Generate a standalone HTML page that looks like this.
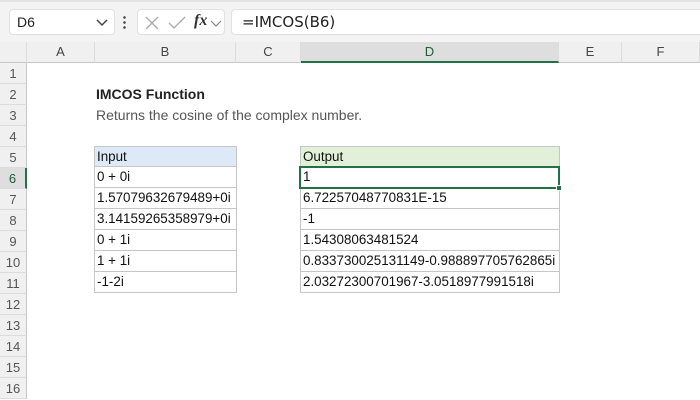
<!DOCTYPE html>
<html><head><style>
*{margin:0;padding:0;box-sizing:border-box}
body{width:700px;height:400px;overflow:hidden;background:#fff;font-family:"Liberation Sans",sans-serif;position:relative}
.abs{position:absolute}
.top{left:0;top:0;width:700px;height:42px;background:#f3f3f3;border-top:2px solid #e3e3e3}
.box{background:#fff;border:1px solid #e1e1e1;border-radius:4px}
.ch{top:42px;height:21px;background:#f0f0f0;border-bottom:1px solid #c8c8c8;border-right:1px solid #dcdcdc;font-size:13px;color:#444;text-align:center;line-height:20px}
.rh{left:0;width:27px;height:21px;background:#f0f0f0;border-bottom:1px solid #dcdcdc;border-right:1px solid #c8c8c8;font-size:13px;color:#555;text-align:center;line-height:21px}
.c{height:21px;border:1px solid #c6c6c6;font-size:13.4px;line-height:20px;padding-left:2px;color:#111;white-space:nowrap}
</style></head><body>
<div class="abs top"></div>
<div class="abs box" style="left:9px;top:9px;width:106px;height:26px;font-size:14px;line-height:24px;padding-left:7px;color:#222">D6
<svg class="abs" style="left:86px;top:9px" width="12" height="8"><path d="M1 1 L6 6 L11 1" stroke="#444" stroke-width="1.5" fill="none"/></svg></div>
<div class="abs" style="left:123px;top:15px;width:3px;height:14px;background:radial-gradient(circle,#555 1.2px,transparent 1.5px) 0 0/3px 5px"></div>
<div class="abs box" style="left:137px;top:9px;width:88px;height:26px">
<svg class="abs" style="left:6px;top:5px" width="16" height="16"><path d="M2 2 L14 14 M14 2 L2 14" stroke="#aaa" stroke-width="1.3"/></svg>
<svg class="abs" style="left:30px;top:5px" width="18" height="16"><path d="M1 8 L6 13 L17 2" stroke="#aaa" stroke-width="1.3" fill="none"/></svg>
<span class="abs" style="left:56px;top:2px;font-family:'Liberation Serif',serif;font-style:italic;font-weight:bold;font-size:16px;color:#333">fx</span>
<svg class="abs" style="left:72px;top:10px" width="12" height="8"><path d="M1 1 L6 6 L11 1" stroke="#888" stroke-width="1.2" fill="none"/></svg>
</div>
<div class="abs box" style="left:231px;top:9px;width:480px;height:26px;font-size:15px;line-height:24px;padding-left:10px;color:#222;font-family:'DejaVu Sans',sans-serif">=IMCOS(B6)</div>

<div class="abs ch" style="left:0;width:27px"></div>
<div class="abs ch" style="left:27px;width:68px">A</div>
<div class="abs ch" style="left:95px;width:141px">B</div>
<div class="abs ch" style="left:236px;width:65px">C</div>
<div class="abs ch" style="left:301px;width:258px;background:#dedede;border-bottom:2px solid #217346;color:#1e5c38">D</div>
<div class="abs ch" style="left:559px;width:63px">E</div>
<div class="abs ch" style="left:622px;width:78px">F</div>

<div class="abs rh" style="top:63px">1</div>
<div class="abs rh" style="top:84px">2</div>
<div class="abs rh" style="top:105px">3</div>
<div class="abs rh" style="top:126px">4</div>
<div class="abs rh" style="top:147px">5</div>
<div class="abs rh" style="top:168px;background:#dedede;border-right:2px solid #217346;color:#1e5c38">6</div>
<div class="abs rh" style="top:189px">7</div>
<div class="abs rh" style="top:210px">8</div>
<div class="abs rh" style="top:231px">9</div>
<div class="abs rh" style="top:252px">10</div>
<div class="abs rh" style="top:273px">11</div>
<div class="abs rh" style="top:294px">12</div>
<div class="abs rh" style="top:315px">13</div>
<div class="abs rh" style="top:336px">14</div>
<div class="abs rh" style="top:357px">15</div>
<div class="abs rh" style="top:378px">16</div>

<div class="abs" style="left:96px;top:86px;font-size:14px;font-weight:bold;color:#222">IMCOS Function</div>
<div class="abs" style="left:96px;top:107px;font-size:14px;color:#555">Returns the cosine of the complex number.</div>

<div class="abs" style="left:94px;top:146px;width:143px">
<div class="c" style="background:#dde9f7">Input</div>
<div class="c" style="border-top:0">0 + 0i</div>
<div class="c" style="border-top:0">1.57079632679489+0i</div>
<div class="c" style="border-top:0">3.14159265358979+0i</div>
<div class="c" style="border-top:0">0 + 1i</div>
<div class="c" style="border-top:0">1 + 1i</div>
<div class="c" style="border-top:0">-1-2i</div>
</div>
<div class="abs" style="left:300px;top:146px;width:260px">
<div class="c" style="background:#e2f0d9">Output</div>
<div class="c" style="border-top:0">1</div>
<div class="c" style="border-top:0">6.72257048770831E-15</div>
<div class="c" style="border-top:0">-1</div>
<div class="c" style="border-top:0">1.54308063481524</div>
<div class="c" style="border-top:0">0.833730025131149-0.988897705762865i</div>
<div class="c" style="border-top:0">2.03272300701967-3.0518977991518i</div>
</div>
<div class="abs" style="left:299px;top:166px;width:261px;height:23px;border:2px solid #217346"></div>
<div class="abs" style="left:556px;top:185px;width:6px;height:6px;background:#217346;border:1px solid #fff"></div>
</body></html>
